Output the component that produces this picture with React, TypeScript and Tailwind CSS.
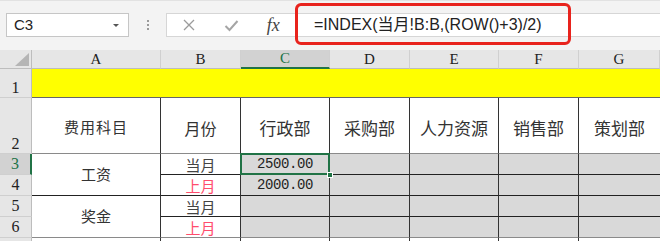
import React from "react";

const cjk = "font-['Noto_Sans_CJK_SC',sans-serif]";
const serif = "font-['Liberation_Serif',serif]";

const cols = ["A", "B", "C", "D", "E", "F", "G"];
const depts = ["行政部", "采购部", "人力资源", "销售部", "策划部"];

function RowHead({ n, active, end }: { n?: number; active?: boolean; end?: boolean }) {
  return (
    <div
      className={`flex justify-center ${end ? "items-end pb-[1px]" : "items-center"} ${serif} text-[16px] leading-none border-b border-[#cfcfcf] ${
        active ? "bg-[#d2d2d2] text-[#217346] border-r-2 border-r-[#217346]" : "bg-[#e6e6e6] text-[#222] border-r border-r-[#bdbdbd]"
      }`}
    >
      {n}
    </div>
  );
}

function Gray({ last }: { last?: boolean }) {
  return <div className={`bg-[#d9d9d9] border-b border-[#222] ${last ? "" : "border-r border-r-[#333]"}`} />;
}

export default function App() {
  return (
    <div className="w-[660px] h-[241px] overflow-hidden bg-white">
      {/* formula bar */}
      <div className="relative h-[50px] bg-[#f3f3f3] border-t border-[#e2e2e2] flex items-start pt-[12px] pl-[6px]">
        <div className="w-[123px] h-[24px] bg-white border border-[#c6c6c6] flex items-center justify-between pl-[7px] pr-[9px]">
          <span className="font-['Liberation_Sans',sans-serif] text-[15px] text-[#222]">C3</span>
          <span className="w-0 h-0 border-x-[3px] border-x-transparent border-t-[3px] border-t-[#555]" />
        </div>
        <div className="w-[37px] h-[24px] flex flex-col items-center justify-center gap-[2px]">
          <span className="w-[2px] h-[2px] bg-[#9a9a9a]" />
          <span className="w-[2px] h-[2px] bg-[#9a9a9a]" />
          <span className="w-[2px] h-[2px] bg-[#9a9a9a]" />
        </div>
        <div className="w-[130px] h-[24px] bg-white border border-[#d6d6d6] flex items-center">
          <span className="w-[44px] flex justify-center">
            <svg width="14" height="14" viewBox="0 0 14 14">
              <path d="M2 2 L12 12 M12 2 L2 12" stroke="#9b9b9b" strokeWidth="1.3" fill="none" />
            </svg>
          </span>
          <span className="w-[42px] flex justify-center">
            <svg width="15" height="13" viewBox="0 0 15 13">
              <path d="M1.5 7 L5.5 11 L13.5 2" stroke="#a5a5a5" strokeWidth="2" fill="none" />
            </svg>
          </span>
          <span className={`w-[44px] flex justify-center ${serif} italic text-[18px] text-[#444] leading-none`}>
            fx
          </span>
        </div>
        <div className="flex-1 h-[24px] bg-white border-y border-[#d6d6d6] flex items-center pl-[18px]">
          <span className="font-['Liberation_Sans','Noto_Sans_CJK_SC',sans-serif] text-[16px] text-[#222] leading-none">
            =INDEX(当月!B:B,(ROW()+3)/2)
          </span>
        </div>
        <div className="absolute left-[295px] top-[2px] w-[276px] h-[42px] border-[3px] border-[#e8231d] rounded-[6px]" />
      </div>

      {/* sheet */}
      <div className="grid grid-cols-[32px_129px_80px_89px_80px_89px_80px_81px] grid-rows-[19px_29px_56px_21px_21px_21px_21px_21px]">
        {/* header row */}
        <div className="bg-[#e6e6e6] border-r border-[#bdbdbd] border-b border-b-[#bdbdbd] flex items-end justify-end pr-[2px] pb-[2px]">
          <svg width="14" height="13" viewBox="0 0 14 13">
            <path d="M14 0 L14 13 L0 13 Z" fill="#b5b5b5" />
          </svg>
        </div>
        {cols.map((c) => (
          <div
            key={c}
            className={`flex items-center justify-center ${serif} text-[15px] leading-none border-r border-[#d0d0d0] ${
              c === "C"
                ? "bg-[#d2d2d2] text-[#217346] border-b-2 border-b-[#217346]"
                : "bg-[#e6e6e6] text-[#222] border-b border-b-[#bdbdbd]"
            }`}
          >
            {c}
          </div>
        ))}

        {/* row 1 */}
        <RowHead n={1} end />
        <div className="col-span-7 bg-[#ffff00] border-b border-[#666]" />

        {/* row 2 */}
        <RowHead n={2} end />
        <div className={`flex items-center justify-center ${cjk} text-[15px] tracking-[1px] text-[#333] bg-white border-r border-[#333] border-b border-b-[#8a8a8a] pt-[4px]`}>
          费用科目
        </div>
        <div className={`flex items-center justify-center ${cjk} text-[16px] text-[#333] bg-white border-r border-[#333] border-b border-b-[#8a8a8a] pt-[4px]`}>
          月份
        </div>
        {depts.map((d, i) => (
          <div
            key={d}
            className={`flex items-center justify-center ${cjk} text-[17px] text-[#333] bg-white border-b border-b-[#8a8a8a] pt-[4px] ${
              i < 4 ? "border-r border-[#333]" : ""
            }`}
          >
            {d}
          </div>
        ))}

        {/* row 3 */}
        <RowHead n={3} active />
        <div className={`row-span-2 flex items-center justify-center ${cjk} text-[15px] text-[#333] bg-white border-r border-[#333] border-b border-b-[#222]`}>
          工资
        </div>
        <div className={`overflow-hidden flex items-center justify-center ${cjk} text-[15px] leading-none text-[#444] bg-white border-r border-[#333] border-b border-b-[#222]`}>
          当月
        </div>
        <div className="relative bg-[#d9d9d9] border-r border-[#333] border-b border-b-[#222] flex items-center justify-center font-['Liberation_Mono',monospace] text-[14px] tracking-[-0.4px] text-[#222]">
          2500.00
          <div className="absolute -left-[1px] -top-[1px] -right-[1px] -bottom-[1px] border-2 border-[#217346]" />
          <div className="absolute -right-[4px] -bottom-[4px] w-[6px] h-[6px] bg-[#217346] border border-white" />
        </div>
        <Gray />
        <Gray />
        <Gray />
        <Gray last />

        {/* row 4 */}
        <RowHead n={4} />
        <div className={`overflow-hidden flex items-center justify-center ${cjk} text-[15px] leading-none text-[#ff4d6d] bg-white border-r border-[#333] border-b border-b-[#222]`}>
          上月
        </div>
        <div className="bg-[#d9d9d9] border-r border-[#333] border-b border-b-[#222] flex items-center justify-center font-['Liberation_Mono',monospace] text-[14px] tracking-[-0.4px] text-[#222]">
          2000.00
        </div>
        <Gray />
        <Gray />
        <Gray />
        <Gray last />

        {/* row 5 */}
        <RowHead n={5} />
        <div className={`row-span-2 flex items-center justify-center ${cjk} text-[15px] text-[#333] bg-white border-r border-[#333] border-b border-b-[#8a8a8a]`}>
          奖金
        </div>
        <div className={`overflow-hidden flex items-center justify-center ${cjk} text-[15px] leading-none text-[#444] bg-white border-r border-[#333] border-b border-b-[#222]`}>
          当月
        </div>
        <Gray />
        <Gray />
        <Gray />
        <Gray />
        <Gray last />

        {/* row 6 */}
        <RowHead n={6} />
        <div className={`overflow-hidden flex items-center justify-center ${cjk} text-[15px] leading-none text-[#ff4d6d] bg-white border-r border-[#333] border-b border-b-[#8a8a8a]`}>
          上月
        </div>
        {[0, 1, 2, 3, 4].map((i) => (
          <div key={i} className={`bg-[#d9d9d9] border-b border-[#8a8a8a] ${i < 4 ? "border-r border-r-[#333]" : ""}`} />
        ))}

        {/* row 7 */}
        <RowHead />
        <div className="bg-white border-r border-[#333]" />
        <div className="bg-white border-r border-[#333]" />
        <div className="bg-white border-r border-[#333]" />
        <div className="bg-white border-r border-[#333]" />
        <div className="bg-white border-r border-[#333]" />
        <div className="bg-white border-r border-[#333]" />
        <div className="bg-white" />
      </div>
    </div>
  );
}
